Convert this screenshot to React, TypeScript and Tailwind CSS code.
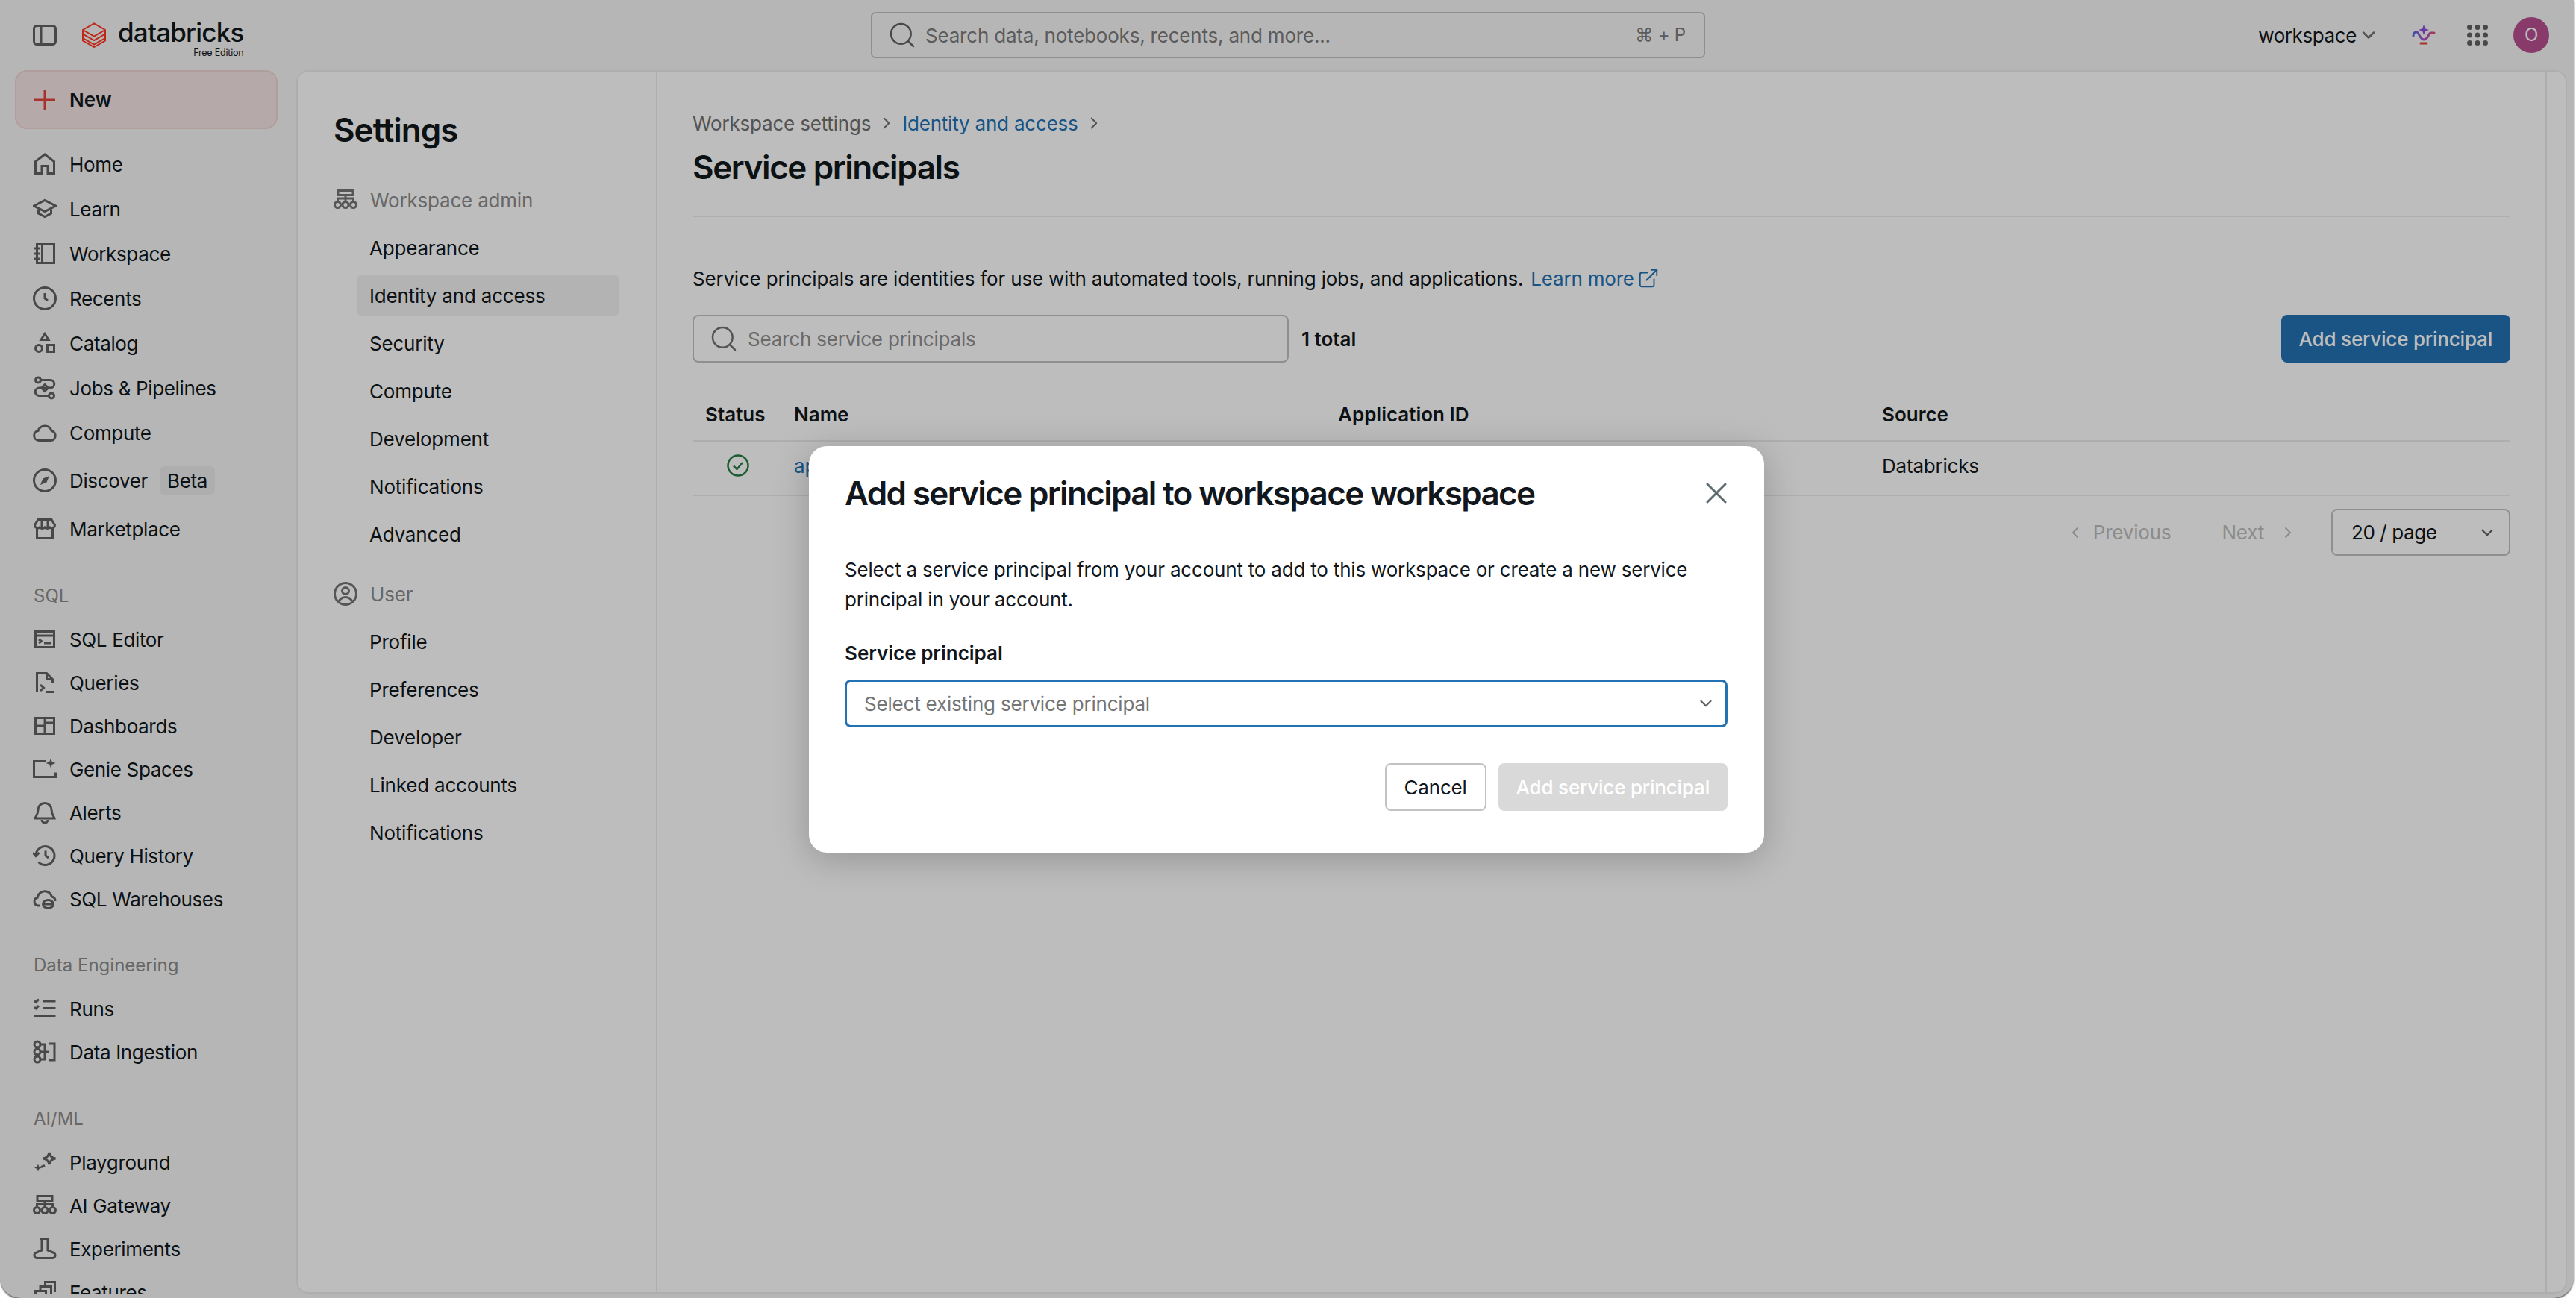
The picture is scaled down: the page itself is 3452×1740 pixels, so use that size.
import React from 'react';
import { X, ChevronDown, ChevronRight, ChevronLeft, Search, ExternalLink } from 'lucide-react';

// icons are 16-unit drawings blown up to the 32px the screenshot uses
const Ico = ({ children, size = 32, className = '' }: { children: React.ReactNode; size?: number; className?: string }) => (
  <svg
    width={size}
    height={size}
    viewBox="0 0 16 16"
    fill="none"
    stroke="currentColor"
    strokeWidth={1.5}
    className={'shrink-0 ' + className}
  >
    {children}
  </svg>
);

const icons: Record<string, React.ReactNode> = {
  home: <path d="M1.75 14.25V6.25L8 1.5l6.25 4.75v8H10V9.25H6v5z" />,
  learn: (
    <>
      <path d="M.75 6 8 2.25 15.25 6 8 9.75z" />
      <path d="M3.75 8.25v2.75L8 13.25 12.25 11V8.25" />
    </>
  ),
  workspace: (
    <>
      <path d="M2.75 1.75h11.5v12.5H2.75z" />
      <path d="M6.25 1.75v12.5M1 4.5h3.5M1 8h3.5M1 11.5h3.5" />
    </>
  ),
  recents: (
    <>
      <circle cx="8" cy="8" r="7.25" />
      <path d="M8 4.5V8l2 1.5" />
    </>
  ),
  catalog: (
    <>
      <path d="M8 1.75 10.5 5.75h-5z" />
      <circle cx="4" cy="11.5" r="2.25" />
      <path d="M9.75 9.25h4.5v4.5h-4.5z" />
    </>
  ),
  jobs: (
    <>
      <circle cx="3.5" cy="2.75" r="1.75" />
      <circle cx="12.5" cy="13.25" r="1.75" />
      <path d="M5.25 2.75h6.5a2.6 2.6 0 0 1 0 5.25H4.25a2.6 2.6 0 0 0 0 5.25h6.5" />
      <path d="M8 5.75 10.25 8 8 10.25 5.75 8z" />
    </>
  ),
  compute: <path d="M4 13.25a3.25 3.25 0 0 1-.5-6.45A4.75 4.75 0 0 1 12.5 6.75a3.3 3.3 0 0 1-.25 6.5z" />,
  discover: (
    <>
      <circle cx="8" cy="8" r="7.25" />
      <path d="M11 5 9.25 9.25 5 11l1.75-4.25z" fill="currentColor" stroke="none" />
    </>
  ),
  marketplace: (
    <>
      <path d="M2.75 7.5v6.75h10.5V7.5" />
      <path d="M3.5 1.75h9l2.25 3.75a2 2 0 0 1-3.25 1.5 2.3 2.3 0 0 1-3.5 0 2.3 2.3 0 0 1-3.5 0 2 2 0 0 1-3.25-1.5z" />
      <path d="M6 2v4.5M10 2v4.5" />
    </>
  ),
  sqlEditor: (
    <>
      <path d="M1.75 2.75h12.5v10.5H1.75zM1.75 5.5h12.5" />
      <path d="M4 8l1.75 1.25L4 10.5M7.5 10.5H12" />
    </>
  ),
  queries: (
    <>
      <path d="M2.75 14V1.75h6.5l4 4v2.5M9.25 1.75v4h4" />
      <path d="M5 9.5l2.25 2-2.25 2M8.5 14.25H14" />
    </>
  ),
  dashboards: <path d="M1.75 2.75h12.5v10.5H1.75zM1.75 8h6.25M8 2.75v10.5M8 6h6.25" />,
  genie: (
    <>
      <path d="M8.5 2.75H.75v10.5h14.5v-3" />
      <path d="M12 .75l.9 2.35 2.35.9-2.35.9L12 7.25l-.9-2.35-2.35-.9 2.35-.9z" fill="currentColor" stroke="none" />
    </>
  ),
  alerts: (
    <>
      <path d="M8 1.75a4.5 4.5 0 0 0-4.5 4.5c0 3-1.75 4.75-2 5.75h13c-.25-1-2-2.75-2-5.75A4.5 4.5 0 0 0 8 1.75z" />
      <path d="M6 13a2 2 0 0 0 4 0" />
    </>
  ),
  history: (
    <>
      <path d="M2 8a6.25 6.25 0 1 1 1.8 4.4" />
      <path d="M0 6l2 2.25L4.25 6M8.5 4.75V8l2 1.5" />
    </>
  ),
  warehouse: (
    <>
      <path d="M5 12.5H3.5a2.75 2.75 0 0 1-.4-5.4A4.9 4.9 0 0 1 12.7 6.5a3 3 0 0 1 2.3 3" />
      <ellipse cx="10.25" cy="11.5" rx="3.5" ry="2.75" />
      <path d="M6.75 11.5h7" />
    </>
  ),
  runs: (
    <path d="M1 2.75l1.1 1L4 1.75M1 7l1.1 1L4 6M6.5 3h8.75M6.5 7.75h8.75M1 12.75h14.25" />
  ),
  ingestion: (
    <>
      <circle cx="3" cy="3" r="2" />
      <circle cx="3" cy="8" r="2" />
      <circle cx="3" cy="13" r="2" />
      <path d="M5 3h3v10H5M5 8h6M10.5 2.5h4v11h-4" />
    </>
  ),
  playground: (
    <>
      <path d="M11 1.5c.4 2.4 1.6 3.6 4.25 4-2.65.4-3.85 1.6-4.25 4-.4-2.4-1.6-3.6-4.25-4 2.65-.4 3.85-1.6 4.25-4z" />
      <path d="M3.5 9.25l.7 1.8 1.8.7-1.8.7-.7 1.8-.7-1.8-1.8-.7 1.8-.7z" fill="currentColor" stroke="none" />
      <path d="M5.5 11.25 8 10.25" />
    </>
  ),
  gateway: (
    <>
      <path d="M3 1.75h10v3H3zM8 4.75V9.5M2.75 8.75V7h10.5v1.75" />
      <circle cx="2.75" cy="11.25" r="2" />
      <circle cx="8" cy="11.25" r="2" />
      <circle cx="13.25" cy="11.25" r="2" />
    </>
  ),
  experiments: (
    <path d="M5 1.25h6M6 1.25V9L2.5 10.5a1.9 1.9 0 0 0 .6 3.75h9.8a1.9 1.9 0 0 0 .6-3.75L10 9V1.25" />
  ),
  features: <path d="M1.75 7.25h7v7h-7zM5 7V4.25h7.25V11M8.25 4V1.25h6.5V8" />,
  user: (
    <>
      <circle cx="8" cy="8" r="7.25" />
      <circle cx="8" cy="6" r="2.25" />
      <path d="M3.5 13c1-1.75 2.5-2.75 4.5-2.75s3.5 1 4.5 2.75" />
    </>
  ),
};

type NavRow = { label: string; icon: string; h?: string; badge?: string };

const NavItem = ({ label, icon, h = 'h-[58px]', badge }: NavRow) => (
  <div className={'flex items-center pl-[44px] text-[26px] tracking-[-0.35px] text-[#11171c] ' + h}>
    <span className="text-[#626262]">
      <Ico>{icons[icon]}</Ico>
    </span>
    <span className="ml-[17px]">{label}</span>
    {badge && <span className="ml-[16px] flex h-[38px] items-center rounded-[6px] bg-[#ebebeb] px-[10px]">{badge}</span>}
  </div>
);

const SectionLabel = ({ text, className }: { text: string; className: string }) => (
  <div className={'flex h-[58px] items-center pl-[45px] text-[24px] tracking-normal text-[#8c8c8c] ' + className}>{text}</div>
);

const Sidebar = () => (
  <aside className="w-[397px] shrink-0 overflow-hidden">
    <div className="ml-[20px] flex h-[79px] w-[352px] items-center rounded-[16px] border-2 border-[#eed5d3] bg-[#f6e5e4] pl-[24px] text-[26px] font-semibold tracking-normal text-[#11171c]">
      <svg width="28" height="28" viewBox="0 0 28 28" className="shrink-0" stroke="#e0443a" strokeWidth="3">
        <path d="M14 0v28M0 14h28" />
      </svg>
      <span className="ml-[19px]">New</span>
    </div>
    <div className="mt-[17px]">
      <NavItem label="Home" icon="home" h="h-[60px]" />
      <NavItem label="Learn" icon="learn" h="h-[60px]" />
      <NavItem label="Workspace" icon="workspace" h="h-[60px]" />
      <NavItem label="Recents" icon="recents" h="h-[60px]" />
      <NavItem label="Catalog" icon="catalog" h="h-[60px]" />
      <NavItem label="Jobs & Pipelines" icon="jobs" h="h-[60px]" />
      <NavItem label="Compute" icon="compute" h="h-[60px]" />
      <NavItem label="Discover" icon="discover" h="h-[68px]" badge="Beta" />
      <NavItem label="Marketplace" icon="marketplace" h="h-[62px]" />
    </div>
    <SectionLabel text="SQL" className="mt-[30px]" />
    <NavItem label="SQL Editor" icon="sqlEditor" />
    <NavItem label="Queries" icon="queries" />
    <NavItem label="Dashboards" icon="dashboards" />
    <NavItem label="Genie Spaces" icon="genie" />
    <NavItem label="Alerts" icon="alerts" />
    <NavItem label="Query History" icon="history" />
    <NavItem label="SQL Warehouses" icon="warehouse" />
    <SectionLabel text="Data Engineering" className="mt-[31px]" />
    <NavItem label="Runs" icon="runs" />
    <NavItem label="Data Ingestion" icon="ingestion" />
    <SectionLabel text="AI/ML" className="mt-[32px]" />
    <NavItem label="Playground" icon="playground" />
    <NavItem label="AI Gateway" icon="gateway" />
    <NavItem label="Experiments" icon="experiments" />
    <NavItem label="Features" icon="features" />
  </aside>
);

const SettingsGroup = ({ title, icon, items, active }: { title: string; icon: string; items: string[]; active?: string }) => (
  <div>
    <div className="flex h-[64px] items-center pl-[48px] text-[26px] text-[#8c8c8c]">
      <span className="text-[#757575]">
        <Ico>{icons[icon]}</Ico>
      </span>
      <span className="ml-[17px]">{title}</span>
    </div>
    {items.map((item) => (
      <div key={item} className="flex h-[64px] items-center pl-[79px]">
        <div
          className={
            'flex h-[56px] w-[352px] items-center rounded-[8px] px-[17px] text-[26px] text-[#11171c] ' +
            (item === active ? 'bg-[#f2f2f2]' : '')
          }
        >
          {item}
        </div>
      </div>
    ))}
  </div>
);

const SettingsNav = () => (
  <nav className="w-[482px] shrink-0 border-r-2 border-[#ebebeb]">
    <h1 className="mt-[50px] h-[56px] pl-[48px] text-[44px] leading-[56px] font-semibold tracking-[-1px] text-[#11171c]">Settings</h1>
    <div className="mt-[34px]">
      <SettingsGroup
        title="Workspace admin"
        icon="gateway"
        active="Identity and access"
        items={['Appearance', 'Identity and access', 'Security', 'Compute', 'Development', 'Notifications', 'Advanced']}
      />
      <div className="mt-[16px]">
        <SettingsGroup
          title="User"
          icon="user"
          items={['Profile', 'Preferences', 'Developer', 'Linked accounts', 'Notifications']}
        />
      </div>
    </div>
  </nav>
);

const ServicePrincipals = () => (
  <main className="min-w-0 flex-1 border-r-2 border-[#ebebeb] px-[47px] text-[26px] text-[#11171c]">
    <div className="mt-[49px] flex h-[40px] items-center">
      <span className="text-[#707070]">Workspace settings</span>
      <ChevronRight size={26} strokeWidth={1.8} className="mx-[8px] text-[#707070]" />
      <span className="text-[#2272b4]">Identity and access</span>
      <ChevronRight size={26} strokeWidth={1.8} className="mx-[8px] text-[#707070]" />
    </div>
    <h2 className="mt-[9px] h-[60px] text-[44px] leading-[60px] font-semibold tracking-[-1.4px]">Service principals</h2>
    <div className="mt-[35px] h-[2px] bg-[#ebebeb]" />
    <div className="mt-[62px] flex h-[40px] items-center">
      <span>Service principals are identities for use with automated tools, running jobs, and applications.</span>
      <span className="ml-[10px] text-[#2272b4]">Learn more</span>
      <ExternalLink size={30} strokeWidth={1.5} className="ml-[4px] text-[#2272b4]" />
    </div>
    <div className="mt-[29px] flex h-[64px] items-center">
      <div className="flex h-full w-[799px] items-center rounded-[8px] border-2 border-[#c2c2c2] pl-[20px] text-[#8f8f8f]">
        <Search size={40} strokeWidth={1.5} className="text-[#707070]" />
        <span className="ml-[12px]">Search service principals</span>
      </div>
      <span className="ml-[17px] font-semibold tracking-normal">1 total</span>
      <button className="ml-auto flex h-full items-center rounded-[8px] bg-[#2272b4] px-[24px] font-medium text-white">
        Add service principal
      </button>
    </div>
    <div className="mt-[34px] grid h-[72px] grid-cols-[136px_729px_729px_1fr] items-center border-b-2 border-[#ebebeb] font-semibold tracking-normal">
      <span className="pl-[17px]">Status</span>
      <span>Name</span>
      <span>Application ID</span>
      <span>Source</span>
    </div>
    <div className="grid h-[73px] grid-cols-[136px_729px_729px_1fr] border-b-2 border-[#ebebeb] pt-[13px]">
      <span className="pt-[4px] pl-[45px]">
        <svg width="32" height="32" viewBox="0 0 16 16" fill="none" stroke="#277c43" strokeWidth="1.25">
          <circle cx="8" cy="7.5" r="6.75" />
          <path d="M5 7.75 7.25 10 11 5.5" />
        </svg>
      </span>
      <span className="text-[#2272b4]">app</span>
      <span />
      <span>Databricks</span>
    </div>
    <div className="mt-[17px] flex h-[63px] items-center justify-end text-[#bdbdbd]">
      <ChevronLeft size={24} strokeWidth={2} />
      <span className="ml-[12px]">Previous</span>
      <span className="ml-[68px]">Next</span>
      <ChevronRight size={24} strokeWidth={2} className="ml-[20px]" />
      <div className="ml-[46px] flex h-full w-[240px] items-center justify-between rounded-[8px] border-2 border-[#c2c2c2] pr-[16px] pl-[25px] tracking-[-0.4px] text-[#11171c]">
        20 / page
        <ChevronDown size={26} strokeWidth={2} className="text-[#5f5f5f]" />
      </div>
    </div>
  </main>
);

const AddDialog = () => (
  <div className="absolute top-[598px] left-[1084px] h-[545px] w-[1280px] rounded-[24px] bg-white pr-[49px] pl-[48px] text-[26px] text-[#11171c] shadow-[0_8px_48px_rgba(0,0,0,0.22)]">
    <div className="mt-[38px] flex h-[50px] items-center justify-between">
      <h3 className="text-[44px] font-semibold tracking-[-1.65px]">Add service principal to workspace workspace</h3>
      <X size={48} strokeWidth={1.5} className="-mr-[9px] text-[#5f6b73]" />
    </div>
    <p className="mt-[58px] w-[1160px] leading-[40px]">
      Select a service principal from your account to add to this workspace or create a new service principal in your
      account.
    </p>
    <div className="mt-[32px] h-[40px] leading-[40px] font-semibold tracking-normal">Service principal</div>
    <div className="mt-[15px] flex h-[64px] items-center justify-between rounded-[8px] border-[3px] border-[#2272b4] pr-[13px] pl-[23px] text-[#757575]">
      Select existing service principal
      <ChevronDown size={26} strokeWidth={2} className="text-[#5f5f5f]" />
    </div>
    <div className="mt-[48px] flex h-[64px] justify-end gap-[16px]">
      <button className="rounded-[8px] border-2 border-[#c2c2c2] px-[24px]">Cancel</button>
      <button className="rounded-[8px] bg-[#d9d9d9] px-[24px] font-medium text-white">Add service principal</button>
    </div>
  </div>
);

const TopBar = () => (
  <header className="flex h-[94px] shrink-0 items-center">
    <div className="flex w-[1167px] shrink-0 items-center pl-[44px]">
      <svg width="32" height="28" viewBox="0 0 32 28" fill="none" stroke="#626262" strokeWidth="3" className="shrink-0">
        <rect x="1.5" y="1.5" width="29" height="25" rx="4" />
        <path d="M11 1.5v25" />
      </svg>
      <svg width="32" height="34" viewBox="0 0 32 34" fill="none" stroke="#ff3621" strokeWidth="2" className="ml-[34px] shrink-0">
        <path d="M1 10 16 1.5 31 10 16 18.5z" />
        <path d="M1 10v5.5l15 8.5 15-8.5V10" />
        <path d="M1 15.5V21l15 8.5L31 21v-5.5" />
        <path d="M1 21v3.5l15 8.5 15-8.5V21" />
      </svg>
      <div className="ml-[16px] flex flex-col items-end">
        <span className="mt-[8px] text-[35px] leading-[40px] font-medium tracking-[-0.8px] text-[#11171c]">databricks</span>
        <span className="text-[12.5px] leading-[16px] text-[#11171c]">Free Edition</span>
      </div>
    </div>
    <div className="flex h-[62px] w-[1118px] shrink-0 items-center rounded-[6px] border-2 border-[#c2c2c2] bg-[#f6f6f6] pr-[24px] pl-[20px] text-[26px] text-[#7b7b7b]">
      <Search size={40} strokeWidth={1.5} className="text-[#626262]" />
      <span className="ml-[11px]">Search data, notebooks, recents, and more...</span>
      <span className="ml-auto text-[24px]">⌘ + P</span>
    </div>
    <div className="flex flex-1 items-center justify-end pr-[33px]">
      <span className="text-[26px] tracking-[-0.4px] text-[#11171c]">workspace</span>
      <ChevronDown size={28} strokeWidth={2.2} className="ml-[2px] text-[#707070]" />
      <svg width="32" height="28" viewBox="0 0 32 28" fill="none" className="ml-[44px]" strokeWidth="3" strokeLinecap="round">
        <path d="M16 0 17.8 5.2 23 7 17.8 8.8 16 14 14.2 8.8 9 7 14.2 5.2z" fill="#8f4fd8" />
        <path d="M2 15c0-4 3-6 5-5 3 1 3 9 9 10 6 0 6-8 9-9h5" stroke="url(#genie)" />
        <path d="M12 25h8" stroke="#e0443a" />
        <defs>
          <linearGradient id="genie" x1="0" x2="32" y1="0" y2="0" gradientUnits="userSpaceOnUse">
            <stop stopColor="#4a6fe0" />
            <stop offset="0.5" stopColor="#a855d0" />
            <stop offset="1" stopColor="#e0506a" />
          </linearGradient>
        </defs>
      </svg>
      <svg width="28" height="28" viewBox="0 0 28 28" fill="#626262" className="ml-[42px]">
        {[3.5, 14, 24.5].flatMap((y) =>
          [3.5, 14, 24.5].map((x) => <circle key={`${x}-${y}`} cx={x} cy={y} r="3.5" />),
        )}
      </svg>
      <span className="ml-[34px] flex h-[48px] w-[48px] items-center justify-center rounded-full bg-[#b84f91] text-[24px] text-white">
        O
      </span>
    </div>
  </header>
);

export default function App() {
  return (
    <div className="relative h-[1740px] w-[3452px] overflow-hidden bg-white font-['Inter','Noto_Sans',sans-serif] tracking-[-0.2px]">
      <div className="relative flex h-full w-[3449px] flex-col overflow-hidden rounded-b-[28px] bg-[#f6f6f6] shadow-[0_2px_2px_rgba(0,0,0,0.6)]">
        <TopBar />
        <div className="flex min-h-0 flex-1 pb-[6px]">
          <Sidebar />
          <div className="mr-[9px] flex min-w-0 flex-1 rounded-[16px] border-2 border-[#ebebeb] bg-white">
            <SettingsNav />
            <ServicePrincipals />
            <div className="w-[25px] shrink-0" />
          </div>
        </div>
        <div className="absolute inset-0 bg-black/[0.26]" />
      </div>
      <AddDialog />
    </div>
  );
}
